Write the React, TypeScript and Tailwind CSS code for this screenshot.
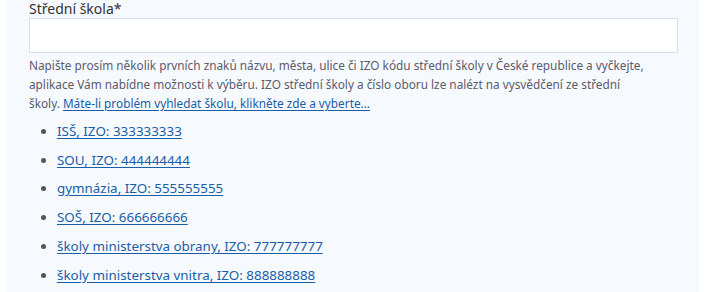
import React from 'react';

const schools = [
    'ISŠ, IZO: 333333333',
    'SOU, IZO: 444444444',
    'gymnázia, IZO: 555555555',
    'SOŠ, IZO: 666666666',
    'školy ministerstva obrany, IZO: 777777777',
    'školy ministerstva vnitra, IZO: 888888888',
];

export default function App() {
    return (
        <div className="w-[705px] h-[292px] bg-white overflow-hidden" style={{ fontFamily: '"Noto Sans", "Open Sans", sans-serif' }}>
            <div className="ml-[7px] w-[692px] h-full bg-[#f6f9fe] pl-[22px] pr-[21px]">
                <label className="block text-[14px] leading-[18px] text-[#333]">Střední škola*</label>
                <input
                    type="text"
                    className="block w-[649px] h-[35px] bg-white border border-[#dcdfe3] outline-none px-2 text-[14px]"
                />
                <p className="mt-[3px] text-[11.8px] leading-[19px] text-[#5c5b6b]">
                    Napište prosím několik prvních znaků názvu, města, ulice či IZO kódu střední školy v České republice a vyčkejte,
                    <br />
                    aplikace Vám nabídne možnosti k výběru. IZO střední školy a číslo oboru lze nalézt na vysvědčení ze střední
                    <br />
                    školy.{' '}
                    <a href="#" className="text-[#1a5ea8] underline underline-offset-2">
                        Máte-li problém vyhledat školu, klikněte zde a vyberte...
                    </a>
                </p>
                <ul className="mt-[4px] pl-[28px] list-disc marker:text-[#555]">
                    {schools.map(s => (
                        <li key={s} className="text-[13.4px] leading-[28.7px] text-[#555]">
                            <a href="#" className="text-[#1a5ea8] underline underline-offset-2">{s}</a>
                        </li>
                    ))}
                </ul>
            </div>
        </div>
    );
}
